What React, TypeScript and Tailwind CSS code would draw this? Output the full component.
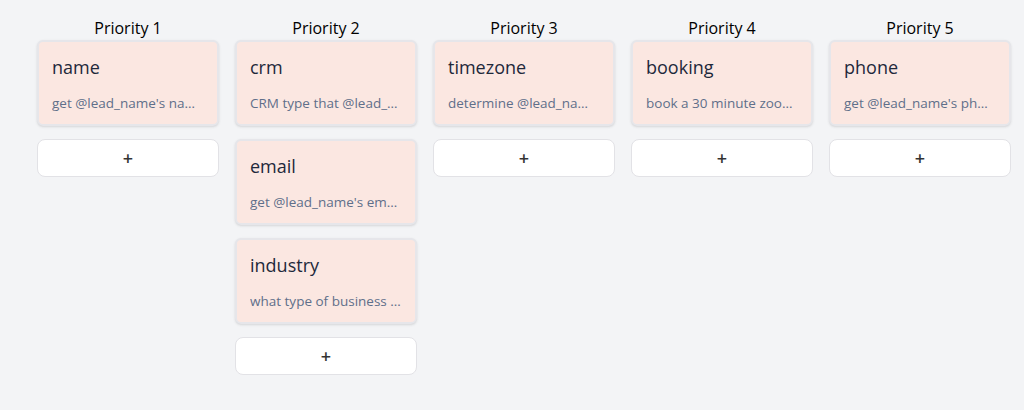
import React from "react";

type Task = { title: string; desc: string };

const columns: { label: string; tasks: Task[] }[] = [
  { label: "Priority 1", tasks: [{ title: "name", desc: "get @lead_name's name" }] },
  {
    label: "Priority 2",
    tasks: [
      { title: "crm", desc: "CRM type that @lead_name uses" },
      { title: "email", desc: "get @lead_name's email" },
      { title: "industry", desc: "what type of business is it" },
    ],
  },
  { label: "Priority 3", tasks: [{ title: "timezone", desc: "determine @lead_name's timezone" }] },
  { label: "Priority 4", tasks: [{ title: "booking", desc: "book a 30 minute zoom call" }] },
  { label: "Priority 5", tasks: [{ title: "phone", desc: "get @lead_name's phone" }] },
];

function TaskCard({ task }: { task: Task }) {
  return (
    <div className="h-[86px] rounded-[6px] border-2 border-[#e6e6ea] bg-[#fbe7e1] pl-[13px] pr-[14px] pt-[12px] shadow-sm">
      <div className="text-[18px] leading-[26px] text-[#1e293b]">{task.title}</div>
      <div className="mt-[13px] truncate text-[13.5px] leading-[20px] text-[#5f6f8a]">{task.desc}</div>
    </div>
  );
}

export default function App() {
  return (
    <div
      className="h-[410px] w-[1024px] bg-[#f3f4f6] pl-[37px] pt-[18px]"
      style={{ fontFamily: '"Open Sans", "Noto Sans", sans-serif' }}
    >
      <div className="flex gap-[16px]">
        {columns.map((col) => (
          <div key={col.label} className="flex w-[182px] flex-col">
            <div className="h-[22px] text-center text-[16px] leading-[20px] text-black">{col.label}</div>
            <div className="flex flex-col gap-[13px]">
              {col.tasks.map((t) => (
                <TaskCard key={t.title} task={t} />
              ))}
              <button className="flex h-[38px] items-center justify-center rounded-[8px] border border-[#e2e2e6] bg-white text-[18px] font-semibold text-[#333]">
                +
              </button>
            </div>
          </div>
        ))}
      </div>
    </div>
  );
}
